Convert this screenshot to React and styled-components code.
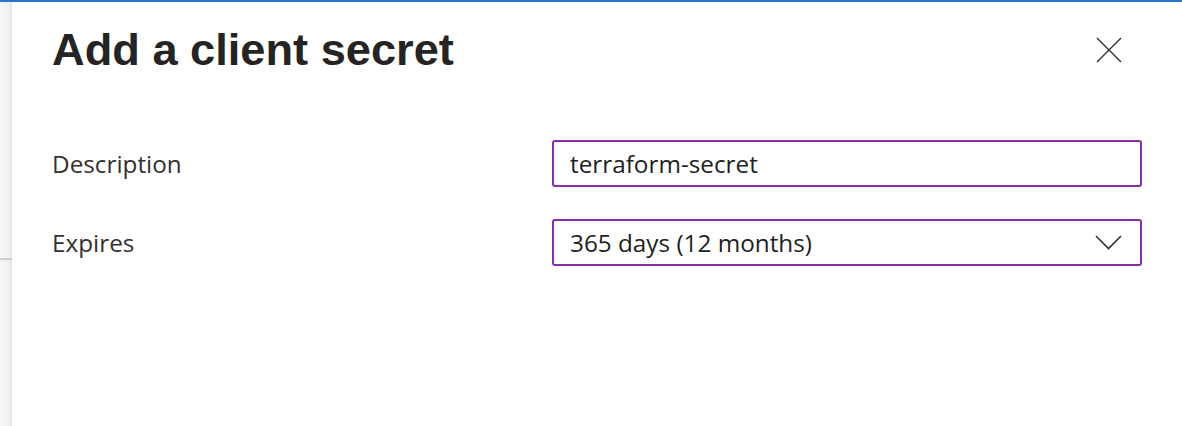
import React from "react";
import styled, { createGlobalStyle } from "styled-components";

const GlobalStyle = createGlobalStyle`
  html, body {
    margin: 0;
    padding: 0;
    background: #ffffff;
  }
  body {
    font-family: "Open Sans", "Noto Sans", sans-serif;
    color: #323130;
  }
`;

const Page = styled.div`
  width: 1182px;
  height: 426px;
  overflow: hidden;
  display: flex;
  flex-direction: column;
`;

const TopBar = styled.div`
  height: 2px;
  background: #2a72d0;
  flex-shrink: 0;
`;

const Body = styled.div`
  flex: 1;
  display: flex;
`;

const BackStrip = styled.div`
  width: 12px;
  flex-shrink: 0;
  padding-top: 256px;
  box-sizing: border-box;
  background: linear-gradient(to right, #f8f8f8 0%, #f1f1f1 70%, #e4e4e4 100%);
`;

const BackLine = styled.div`
  height: 2px;
  background: #cfcfcf;
`;

const Panel = styled.div`
  flex: 1;
  padding: 0 40px;
`;

const Header = styled.div`
  display: flex;
  justify-content: space-between;
  align-items: flex-start;
  padding-top: 25px;
`;

const Title = styled.h1`
  margin: 0;
  font-family: "Liberation Sans", Arial, sans-serif;
  font-weight: 700;
  font-size: 45.2px;
  line-height: 45px;
  color: #252423;
`;

const CloseButton = styled.button`
  border: none;
  background: none;
  padding: 0;
  margin: 10px 20px 0 0;
  width: 26px;
  height: 26px;
  display: flex;
  align-items: center;
  justify-content: center;
  cursor: pointer;
  color: #323130;
`;

const Form = styled.div`
  margin-top: 68px;
  display: flex;
  flex-direction: column;
  gap: 32px;
`;

const Row = styled.div`
  display: flex;
  align-items: center;
`;

const Label = styled.div`
  width: 500px;
  font-size: 24.3px;
  line-height: 32px;
  color: #323130;
`;

const Field = styled.div`
  width: 590px;
  height: 47px;
  box-sizing: border-box;
  border: 2px solid #8a2ea8;
  border-radius: 3px;
  display: flex;
  align-items: center;
  justify-content: space-between;
  padding: 0 16px 0 16px;
  font-size: 24.3px;
  line-height: 32px;
  color: #201f1e;
`;

const Chevron = styled.svg`
  width: 27px;
  height: 15px;
  margin-right: 2px;
`;

const App = () => {
  return (
    <>
      <GlobalStyle />
      <Page>
        <TopBar />
        <Body>
          <BackStrip>
            <BackLine />
          </BackStrip>
          <Panel>
            <Header>
              <Title>Add a client secret</Title>
              <CloseButton aria-label="Close">
                <svg width="26" height="26" viewBox="0 0 26 26">
                  <path
                    d="M1 1 L25 25 M25 1 L1 25"
                    stroke="#323130"
                    strokeWidth="1.4"
                    fill="none"
                  />
                </svg>
              </CloseButton>
            </Header>
            <Form>
              <Row>
                <Label>Description</Label>
                <Field>terraform-secret</Field>
              </Row>
              <Row>
                <Label>Expires</Label>
                <Field>
                  365 days (12 months)
                  <Chevron viewBox="0 0 27 15">
                    <path
                      d="M1 1 L13.5 13.5 L26 1"
                      stroke="#323130"
                      strokeWidth="1.6"
                      fill="none"
                    />
                  </Chevron>
                </Field>
              </Row>
            </Form>
          </Panel>
        </Body>
      </Page>
    </>
  );
};

export default App;
